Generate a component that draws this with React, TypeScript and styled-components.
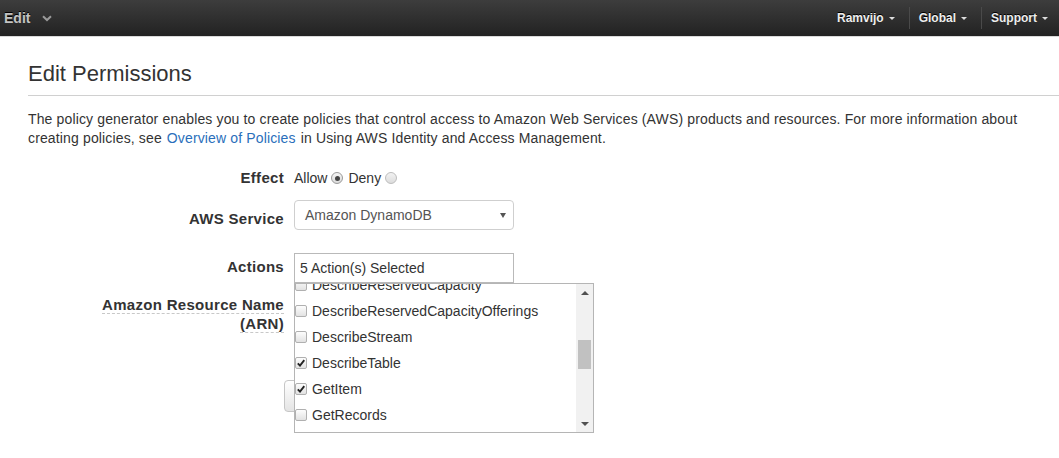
import React from 'react';
import styled, { createGlobalStyle } from 'styled-components';

const GlobalStyle = createGlobalStyle`
  html, body { margin: 0; padding: 0; background: #fff; }
  body {
    font-family: "Liberation Sans", Arial, sans-serif;
    font-size: 14px;
    color: #333;
    min-height: 458px;
  }
`;

const TopBar = styled.header`
  height: 36px;
  background: linear-gradient(#3d3d3d, #222);
  border-bottom: 1px solid #d9d9d9;
  display: flex;
  align-items: center;
  justify-content: space-between;
`;

const ServiceMenu = styled.div`
  display: flex;
  align-items: center;
  padding-left: 4px;
  gap: 12px;
  font-family: "Liberation Sans", Arial, sans-serif;
  font-size: 14px;
  font-weight: bold;
  color: #c4c4c4;
  text-shadow: 0 -1px 0 #000;
`;

const NavList = styled.nav`
  display: flex;
  align-items: center;
  height: 100%;
`;

const NavItem = styled.div<{ $sep?: boolean; $last?: boolean }>`
  display: flex;
  align-items: center;
  gap: 5px;
  height: 22px;
  padding: 0 ${(p) => (p.$last ? 11 : 14)}px 0 9px;
  border-left: ${(p) => (p.$sep ? '1px solid #4a4a4a' : 'none')};
  font-family: "Liberation Sans", Arial, sans-serif;
  font-size: 12px;
  font-weight: bold;
  color: #eee;
  text-shadow: 0 -1px 0 #000;
`;

const Caret = styled.span`
  width: 0;
  height: 0;
  border-left: 3px solid transparent;
  border-right: 3px solid transparent;
  border-top: 3px solid #ddd;
  margin-top: 1px;
`;

const Content = styled.main`
  padding: 0 0 40px 28px;
`;

const Title = styled.h1`
  margin: 24px 0 0;
  padding-bottom: 8px;
  border-bottom: 1px solid #d0d0d0;
  font-size: 22px;
  line-height: 26px;
  font-weight: normal;
  color: #333;
`;

const Intro = styled.p`
  margin: 14px 0 0;
  padding-right: 30px;
  line-height: 19px;
  letter-spacing: 0.14px;
  color: #333;
`;

const Link = styled.a`
  color: #2a6fbb;
  text-decoration: none;
  margin: 0 5px;
`;

const Form = styled.div`
  display: flex;
  flex-direction: column;
`;

const Row = styled.div<{ $mt: number }>`
  display: flex;
  align-items: flex-start;
  margin-top: ${(p) => p.$mt}px;
`;

const Label = styled.div<{ $pt?: number; $lh?: number }>`
  width: 256px;
  box-sizing: border-box;
  padding-left: 65px;
  padding-top: ${(p) => p.$pt ?? 0}px;
  text-align: right;
  font-size: 15px;
  letter-spacing: 0.3px;
  font-weight: bold;
  line-height: ${(p) => p.$lh ?? 20}px;
  color: #333;
`;

const Dotted = styled.span`
  border-bottom: 1px dashed #c8c8c8;
`;

const Control = styled.div`
  margin-left: 10px;
  position: relative;
  display: flex;
  align-items: center;
  line-height: 20px;
`;

const RadioLabel = styled.label`
  display: flex;
  align-items: center;
  gap: 4px;
  margin-right: 5px;
  color: #333;
`;

const Radio = styled.span<{ $checked?: boolean }>`
  width: 12px;
  height: 12px;
  box-sizing: border-box;
  border-radius: 50%;
  border: 1px solid ${(p) => (p.$checked ? '#9a9a9a' : '#bdbdbd')};
  background: ${(p) => (p.$checked ? 'linear-gradient(#f4f4f4, #dcdcdc)' : 'linear-gradient(#f2f2f2, #dcdcdc)')};
  display: flex;
  align-items: center;
  justify-content: center;
  &::after {
    content: '';
    display: ${(p) => (p.$checked ? 'block' : 'none')};
    width: 5px;
    height: 5px;
    border-radius: 50%;
    background: #444;
  }
`;

const Select = styled.div`
  width: 220px;
  height: 30px;
  box-sizing: border-box;
  border: 1px solid #cfcfcf;
  border-radius: 4px;
  background: #fff;
  display: flex;
  align-items: center;
  justify-content: space-between;
  padding: 0 7px 0 10px;
  color: #555;
`;

const SelectArrow = styled.span`
  width: 0;
  height: 0;
  border-left: 3px solid transparent;
  border-right: 3px solid transparent;
  border-top: 5px solid #555;
  margin-top: 1px;
`;

const TextInput = styled.div`
  width: 220px;
  height: 30px;
  box-sizing: border-box;
  border: 1px solid #b9b9b9;
  background: #fff;
  display: flex;
  align-items: center;
  padding-left: 5px;
  color: #333;
`;

const ListBox = styled.div`
  position: absolute;
  top: 100%;
  left: 0;
  width: 300px;
  height: 150px;
  box-sizing: border-box;
  border: 1px solid #b5b5b5;
  background: #fff;
  display: flex;
  z-index: 5;
`;

const Items = styled.ul`
  flex: 1;
  margin: 0;
  padding: 0;
  list-style: none;
  overflow: hidden;
`;

const ItemsScroll = styled.div<{ $offset: number }>`
  margin-top: ${(p) => -p.$offset}px;
`;

const Item = styled.li`
  height: 26px;
  display: flex;
  align-items: center;
  gap: 5px;
  line-height: 26px;
  color: #333;
  white-space: nowrap;
`;

const Checkbox = styled.span`
  width: 12px;
  height: 12px;
  box-sizing: border-box;
  flex: none;
  border: 1px solid #b0b0b0;
  border-radius: 2px;
  background: linear-gradient(#fdfdfd, #e2e2e2);
  display: flex;
  align-items: center;
  justify-content: center;
`;

const Scrollbar = styled.div`
  width: 17px;
  background: #f1f1f1;
  display: flex;
  flex-direction: column;
`;

const ScrollButton = styled.div`
  height: 17px;
  display: flex;
  align-items: center;
  justify-content: center;
`;

const Triangle = styled.span<{ $up?: boolean }>`
  width: 0;
  height: 0;
  border-left: 4px solid transparent;
  border-right: 4px solid transparent;
  ${(p) => (p.$up ? 'border-bottom: 4px solid #505050;' : 'border-top: 4px solid #505050;')}
`;

const Track = styled.div`
  flex: 1;
`;

const Thumb = styled.div<{ $top: number; $h: number }>`
  margin: ${(p) => p.$top}px 2px 0;
  height: ${(p) => p.$h}px;
  background: #c1c1c1;
`;

const ButtonRow = styled.div`
  margin-top: 47px;
  padding-left: 256px;
`;

const Button = styled.button`
  height: 32px;
  padding: 0 14px;
  border: 1px solid #c6c6c6;
  border-radius: 4px;
  background: linear-gradient(#fff, #e4e4e4);
  font-family: "Liberation Sans", Arial, sans-serif;
  font-size: 14px;
  color: #333;
`;

const CheckMark = () => (
  <svg width="8" height="8" viewBox="0 0 8 8">
    <path d="M0.8 4.3 L3 6.6 L7.3 1.2" fill="none" stroke="#222" strokeWidth="1.9" />
  </svg>
);

const actions: { name: string; checked: boolean }[] = [
  { name: 'DescribeReservedCapacity', checked: false },
  { name: 'DescribeReservedCapacityOfferings', checked: false },
  { name: 'DescribeStream', checked: false },
  { name: 'DescribeTable', checked: true },
  { name: 'GetItem', checked: true },
  { name: 'GetRecords', checked: false },
  { name: 'ListStreams', checked: false },
];

export default function App() {
  return (
    <>
      <GlobalStyle />
      <TopBar>
        <ServiceMenu>
          <span>Edit</span>
          <svg width="10" height="7" viewBox="0 0 10 7">
            <path d="M1 1.2 L5 5 L9 1.2" fill="none" stroke="#9a9a9a" strokeWidth="2" />
          </svg>
        </ServiceMenu>
        <NavList>
          <NavItem>
            Ramvijo <Caret />
          </NavItem>
          <NavItem $sep>
            Global <Caret />
          </NavItem>
          <NavItem $sep $last>
            Support <Caret />
          </NavItem>
        </NavList>
      </TopBar>
      <Content>
        <Title>Edit Permissions</Title>
        <Intro>
          The policy generator enables you to create policies that control access to Amazon Web
          Services (AWS) products and resources. For more information about creating policies,
          see<Link href="#">Overview of Policies</Link>in Using AWS Identity and Access Management.
        </Intro>
        <Form>
          <Row $mt={20}>
            <Label>Effect</Label>
            <Control>
              <RadioLabel>
                Allow <Radio $checked />
              </RadioLabel>
              <RadioLabel>
                Deny <Radio />
              </RadioLabel>
            </Control>
          </Row>
          <Row $mt={12}>
            <Label $pt={9}>AWS Service</Label>
            <Control>
              <Select>
                <span>Amazon DynamoDB</span>
                <SelectArrow />
              </Select>
            </Control>
          </Row>
          <Row $mt={23}>
            <Label $pt={4}>Actions</Label>
            <Control>
              <TextInput>5 Action(s) Selected</TextInput>
              <ListBox>
                <Items>
                  <ItemsScroll $offset={12}>
                    {actions.map((a) => (
                      <Item key={a.name}>
                        <Checkbox>{a.checked && <CheckMark />}</Checkbox>
                        {a.name}
                      </Item>
                    ))}
                  </ItemsScroll>
                </Items>
                <Scrollbar>
                  <ScrollButton>
                    <Triangle $up />
                  </ScrollButton>
                  <Track>
                    <Thumb $top={39} $h={29} />
                  </Track>
                  <ScrollButton>
                    <Triangle />
                  </ScrollButton>
                </Scrollbar>
              </ListBox>
            </Control>
          </Row>
          <Row $mt={12}>
            <Label $lh={19}>
              <Dotted>Amazon Resource Name</Dotted> <Dotted>(ARN)</Dotted>
            </Label>
          </Row>
          <ButtonRow>
            <Button>Add Statement</Button>
          </ButtonRow>
        </Form>
      </Content>
    </>
  );
}
